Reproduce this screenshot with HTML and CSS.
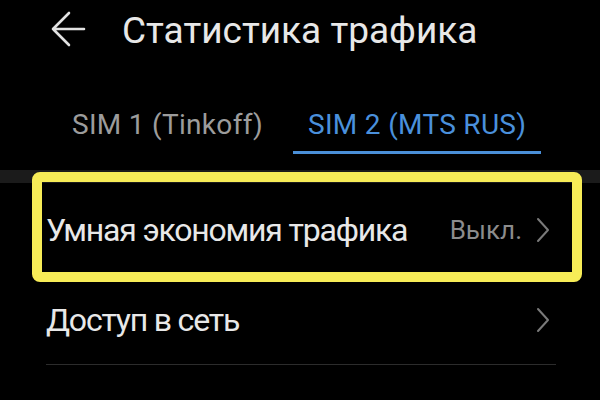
FILE: index.html
```html
<!DOCTYPE html>
<html lang="ru">
<head>
    <meta charset="UTF-8">
    <meta name="viewport" content="width=device-width, initial-scale=1.0">
    <title>Статистика трафика</title>
    <link rel="stylesheet" href="styles.css">
</head>
<body>
    <div class="header">
        <svg class="back" width="36" height="38" viewBox="0 0 36 38">
            <path d="M34 18H3M19 2L3 18l16 16" fill="none" stroke="#e2e2e2" stroke-width="2.6" stroke-linecap="round" stroke-linejoin="round"/>
        </svg>
        <h1>Статистика трафика</h1>
    </div>

    <div class="tabs">
        <div class="tab">SIM 1 (Tinkoff)</div>
        <div class="tab active">SIM 2 (MTS RUS)</div>
    </div>

    <div class="band"></div>

    <div class="list">
        <div class="row highlighted">
            <span class="label">Умная экономия трафика</span>
            <span class="value">Выкл.</span>
            <svg class="chevron" width="14" height="26" viewBox="0 0 14 26">
                <path d="M2 2l10 11L2 24" fill="none" stroke="#7a7a7a" stroke-width="2" stroke-linecap="round" stroke-linejoin="round"/>
            </svg>
        </div>
        <div class="row divided">
            <span class="label">Доступ в сеть</span>
            <svg class="chevron" width="14" height="26" viewBox="0 0 14 26">
                <path d="M2 2l10 11L2 24" fill="none" stroke="#7a7a7a" stroke-width="2" stroke-linecap="round" stroke-linejoin="round"/>
            </svg>
        </div>
    </div>
</body>
</html>
```

FILE: styles.css
```css
body {
    margin: 0;
    background-color: #000;
    font-family: Roboto, "Noto Sans", sans-serif;
    color: #e8e8e8;
    overflow: hidden;
}
.header {
    display: flex;
    align-items: center;
    height: 60px;
    padding-left: 50px;
}
.back {
    flex: none;
    margin-right: 36px;
}
h1 {
    margin: 0;
    font-size: 37px;
    font-weight: 400;
    letter-spacing: 0;
}
.tabs {
    display: flex;
    gap: 15px;
    padding: 48px 0 0 57px;
}
.tab {
    padding: 0 15px 10px;
    font-size: 28px;
    letter-spacing: 0.3px;
    color: #9c9c9c;
    border-bottom: 3px solid transparent;
}
.tab.active {
    color: #4a90dc;
    border-bottom-color: #4a8fd8;
}
.band {
    height: 13px;
    margin-top: 16px;
    background-color: #1b1b1b;
}
.row {
    display: flex;
    align-items: center;
    padding: 0 50px 0 46px;
    font-size: 32px;
    letter-spacing: -1.2px;
}
.row .label {
    flex: 1;
}
.row .value {
    margin-right: 14px;
    font-size: 26px;
    letter-spacing: 0;
    color: #8c8c8c;
}
.highlighted {
    position: relative;
    height: 93px;
}
.highlighted::after {
    content: "";
    position: absolute;
    left: 32px;
    right: 18px;
    top: -11px;
    bottom: -6px;
    border: 10px solid #f7ec57;
    border-radius: 8px;
}
.divided {
    height: 88px;
    margin: 0 44px 0 46px;
    padding: 0 6px 0 0;
    border-bottom: 1px solid #2c2c2c;
}
```
